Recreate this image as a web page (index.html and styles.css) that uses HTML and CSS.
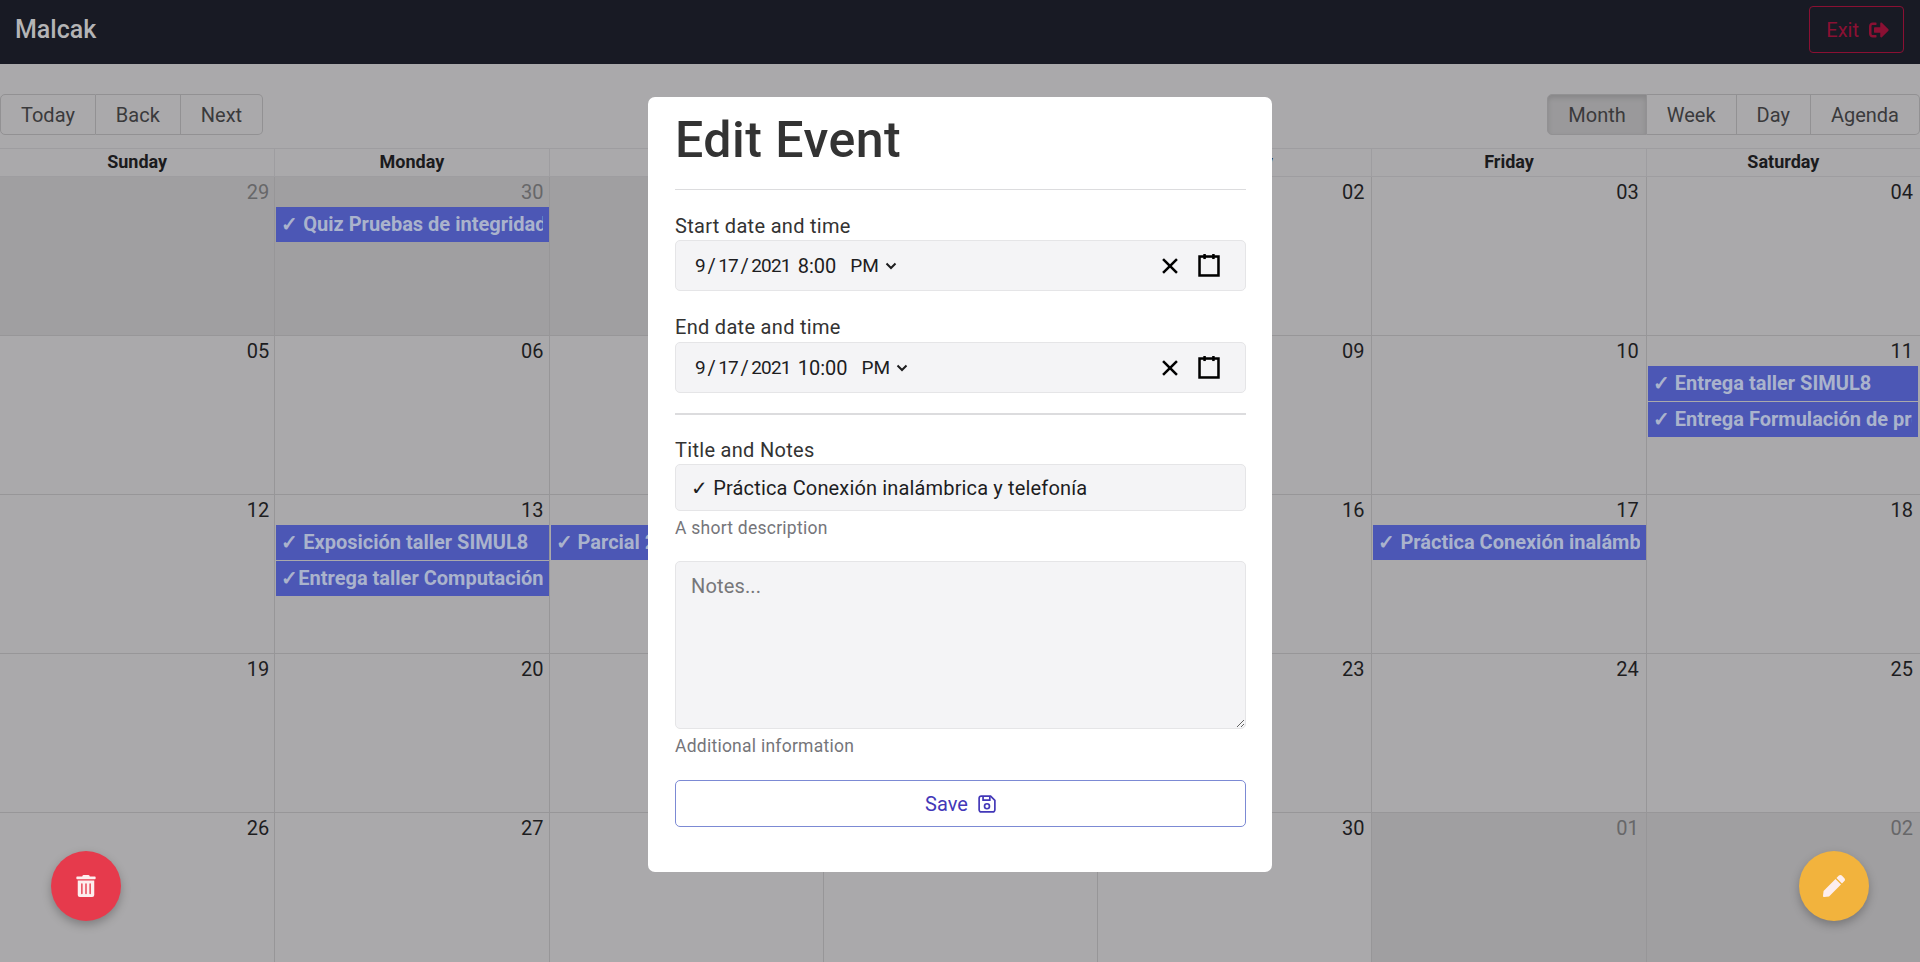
FILE: index.html
```html
<!DOCTYPE html>
<html>
<head>
    <title>Malcak</title>
    <link rel="stylesheet" href="styles.css">
</head>
<body>
    <header class="navbar">
        <span class="brand">Malcak</span>
        <button class="exit-btn">Exit
            <svg class="exit-icon" viewBox="0 0 512 512"><path d="M497 273L329 441c-15 15-41 4.500-41-17v-96H152c-13.300 0-24-10.700-24-24v-96c0-13.300 10.700-24 24-24h136V88c0-21.400 25.900-32 41-17l168 168c9.300 9.400 9.300 24.600 0 34zM192 436v-40c0-6.600-5.400-12-12-12H96c-17.700 0-32-14.300-32-32V160c0-17.700 14.300-32 32-32h84c6.600 0 12-5.400 12-12V76c0-6.600-5.400-12-12-12H96c-53 0-96 43-96 96v192c0 53 43 96 96 96h84c6.600 0 12-5.400 12-12z"/></svg>
        </button>
    </header>

    <main class="calendar">
        <div class="toolbar">
            <div class="btn-group">
                <button class="tool-btn">Today</button>
                <button class="tool-btn">Back</button>
                <button class="tool-btn">Next</button>
            </div>
            <div class="btn-group">
                <button class="tool-btn active">Month</button>
                <button class="tool-btn">Week</button>
                <button class="tool-btn">Day</button>
                <button class="tool-btn">Agenda</button>
            </div>
        </div>

        <div class="day-names">
            <div>Sunday</div>
            <div>Monday</div>
            <div>Tuesday</div>
            <div>Wednesday</div>
            <div>Thursday</div>
            <div>Friday</div>
            <div>Saturday</div>
        </div>

        <div class="week">
            <div class="cell off"><span class="date">29</span></div>
            <div class="cell off"><span class="date">30</span>
                <div class="event"><span>✓ Quiz Pruebas de integridad</span></div>
            </div>
            <div class="cell off"><span class="date">31</span></div>
            <div class="cell"><span class="date">01</span></div>
            <div class="cell"><span class="date">02</span></div>
            <div class="cell"><span class="date">03</span></div>
            <div class="cell"><span class="date">04</span></div>
        </div>
        <div class="week">
            <div class="cell"><span class="date">05</span></div>
            <div class="cell"><span class="date">06</span></div>
            <div class="cell"><span class="date">07</span></div>
            <div class="cell"><span class="date">08</span></div>
            <div class="cell"><span class="date">09</span></div>
            <div class="cell"><span class="date">10</span></div>
            <div class="cell"><span class="date">11</span>
                <div class="event"><span>✓ Entrega taller SIMUL8</span></div>
                <div class="event"><span>✓ Entrega Formulación de proyecto</span></div>
            </div>
        </div>
        <div class="week">
            <div class="cell"><span class="date">12</span></div>
            <div class="cell"><span class="date">13</span>
                <div class="event"><span>✓ Exposición taller SIMUL8</span></div>
                <div class="event"><span>✓Entrega taller Computación</span></div>
            </div>
            <div class="cell"><span class="date">14</span>
                <div class="event"><span>✓ Parcial 2</span></div>
            </div>
            <div class="cell"><span class="date">15</span></div>
            <div class="cell"><span class="date">16</span></div>
            <div class="cell"><span class="date">17</span>
                <div class="event"><span>✓ Práctica Conexión inalámbrica y telefonía</span></div>
            </div>
            <div class="cell"><span class="date">18</span></div>
        </div>
        <div class="week">
            <div class="cell"><span class="date">19</span></div>
            <div class="cell"><span class="date">20</span></div>
            <div class="cell"><span class="date">21</span></div>
            <div class="cell"><span class="date">22</span></div>
            <div class="cell"><span class="date">23</span></div>
            <div class="cell"><span class="date">24</span></div>
            <div class="cell"><span class="date">25</span></div>
        </div>
        <div class="week">
            <div class="cell"><span class="date">26</span></div>
            <div class="cell"><span class="date">27</span></div>
            <div class="cell"><span class="date">28</span></div>
            <div class="cell"><span class="date">29</span></div>
            <div class="cell"><span class="date">30</span></div>
            <div class="cell off"><span class="date">01</span></div>
            <div class="cell off"><span class="date">02</span></div>
        </div>
    </main>

    <button class="fab fab-delete">
        <svg viewBox="0 0 448 512"><path d="M32 464a48 48 0 0 0 48 48h288a48 48 0 0 0 48-48V128H32zm272-256a16 16 0 0 1 32 0v224a16 16 0 0 1-32 0zm-96 0a16 16 0 0 1 32 0v224a16 16 0 0 1-32 0zm-96 0a16 16 0 0 1 32 0v224a16 16 0 0 1-32 0zM432 32H312l-9.400-18.700A24 24 0 0 0 281.100 0H166.800a23.720 23.720 0 0 0-21.400 13.300L136 32H16A16 16 0 0 0 0 48v32a16 16 0 0 0 16 16h416a16 16 0 0 0 16-16V48a16 16 0 0 0-16-16z"/></svg>
    </button>
    <button class="fab fab-edit">
        <svg viewBox="0 0 512 512"><path d="M290.740 93.240l128.020 128.020-277.990 277.990-114.140 12.600C11.350 513.540-1.560 500.620.140 485.340l12.700-114.220 277.900-278.880zm207.200-19.060l-60.110-60.110c-18.750-18.750-49.160-18.750-67.910 0l-56.550 56.550 128.020 128.020 56.550-56.550c18.750-18.760 18.750-49.160 0-67.910z"/></svg>
    </button>

    <div class="modal">
        <h1 class="modal-title">Edit Event</h1>
        <hr class="rule">

        <label class="field-label">Start date and time</label>
        <div class="picker">
            <span class="picker-value">
                <span class="date-part">9</span><i>/</i><span class="date-part">17</span><i>/</i><span class="date-part">2021</span>
                <span class="time">8:00</span>
                <span class="ampm">PM</span>
                <svg class="chevron" viewBox="0 0 12 8"><path d="M1.500 1.500L6 6l4.500-4.500"/></svg>
            </span>
            <svg class="picker-icon" viewBox="0 0 19 19"><line x1="4" x2="15" y1="4" y2="15"/><line x1="15" x2="4" y1="4" y2="15"/></svg>
            <svg class="picker-icon" viewBox="0 0 19 19"><rect x="2" y="2" width="15" height="15" fill="none"/><line x1="6" x2="6" y1="0" y2="4"/><line x1="13" x2="13" y1="0" y2="4"/></svg>
        </div>

        <label class="field-label end-label">End date and time</label>
        <div class="picker">
            <span class="picker-value">
                <span class="date-part">9</span><i>/</i><span class="date-part">17</span><i>/</i><span class="date-part">2021</span>
                <span class="time">10:00</span>
                <span class="ampm">PM</span>
                <svg class="chevron" viewBox="0 0 12 8"><path d="M1.500 1.500L6 6l4.500-4.500"/></svg>
            </span>
            <svg class="picker-icon" viewBox="0 0 19 19"><line x1="4" x2="15" y1="4" y2="15"/><line x1="15" x2="4" y1="4" y2="15"/></svg>
            <svg class="picker-icon" viewBox="0 0 19 19"><rect x="2" y="2" width="15" height="15" fill="none"/><line x1="6" x2="6" y1="0" y2="4"/><line x1="13" x2="13" y1="0" y2="4"/></svg>
        </div>

        <hr class="rule rule-mid">

        <label class="field-label">Title and Notes</label>
        <input class="text-input" type="text" value="✓ Práctica Conexión inalámbrica y telefonía">
        <div class="hint">A short description</div>

        <textarea class="notes" placeholder="Notes..."></textarea>
        <div class="hint">Additional information</div>

        <button class="save-btn">Save
            <svg class="save-icon" viewBox="0 0 16 16"><path d="M2.800 1h8.400L15 4.800v8.400a1.800 1.800 0 0 1-1.800 1.800H2.800A1.800 1.800 0 0 1 1 13.200V2.800A1.800 1.800 0 0 1 2.800 1z"/><path d="M4.500 1v3.500h6V1"/><circle cx="8" cy="10" r="2.200"/></svg>
        </button>
    </div>
</body>
</html>
```

FILE: styles.css
```css
html,
body {
    height: 100%;
}

body {
    margin: 0;
    overflow: hidden;
    background-color: #aaa9ab;
    color: #1d1d1f;
    font-family: 'Roboto', 'Noto Sans', sans-serif;
    font-size: 20px;
    line-height: 30px;
}

button {
    font-family: inherit;
    font-size: inherit;
    line-height: inherit;
    cursor: pointer;
}

/* navbar */
.navbar {
    display: flex;
    align-items: center;
    justify-content: space-between;
    height: 64px;
    box-sizing: border-box;
    padding: 0 16px 5px 15px;
    background-color: #181a24;
}

.brand {
    color: #b4b4b6;
    font-size: 25px;
    font-weight: 500;
}

.exit-btn {
    display: flex;
    align-items: center;
    gap: 10px;
    height: 47px;
    padding: 0 14px 0 16px;
    border: 1px solid #8a1033;
    border-radius: 4px;
    background: none;
    color: #8a1033;
}

.exit-icon {
    width: 20px;
    height: 20px;
    fill: #8a1033;
}

/* calendar */
.calendar {
    height: 898px;
    overflow: hidden;
}

.toolbar {
    display: flex;
    justify-content: space-between;
    margin: 30px 0 13px;
}

.btn-group {
    display: flex;
}

.tool-btn {
    height: 41px;
    padding: 0 20px;
    border: 1px solid #929193;
    border-left-width: 0;
    background: none;
    color: #3a3a3c;
}

.tool-btn:first-child {
    border-left-width: 1px;
    border-radius: 5px 0 0 5px;
}

.tool-btn:last-child {
    border-radius: 0 5px 5px 0;
}

.tool-btn.active {
    background-color: #9a999b;
    box-shadow: inset 0 3px 5px rgba(0, 0, 0, 0.12);
}

.day-names {
    display: grid;
    grid-template-columns: repeat(7, 1fr);
    height: 29px;
    border-top: 1px solid #9e9da0;
    border-bottom: 1px solid #9e9da0;
    box-sizing: border-box;
    font-size: 18px;
    font-weight: 700;
    line-height: 25px;
    text-align: center;
    color: #1b1b1d;
}

.day-names div + div {
    border-left: 1px solid #9e9da0;
}

.week {
    display: grid;
    grid-template-columns: repeat(7, 1fr);
    height: 159px;
}

.day-names + .week {
    height: 158px;
}

.week + .week .cell {
    border-top: 1px solid #979698;
}

.cell {
    display: flex;
    flex-direction: column;
    min-width: 0;
    box-sizing: border-box;
}

.cell + .cell {
    border-left: 1px solid #979698;
}

.cell.off {
    background-color: #a09fa1;
}

.cell.off .date {
    color: #676769;
}

.date {
    padding-right: 5px;
    text-align: right;
}

.cell:nth-child(n+5) .date {
    padding-right: 7px;
}

.event {
    height: 35px;
    margin: 0 0 1px 1px;
    padding: 2px 6px 2px 5px;
    box-sizing: border-box;
    background-color: #4c57b5;
    color: #aab3cc;
    font-weight: 700;
    white-space: nowrap;
}

.cell:last-child .event {
    margin-right: 2px;
}

.event span {
    display: block;
    overflow: hidden;
}

/* floating buttons */
.fab {
    position: fixed;
    bottom: 41px;
    display: flex;
    align-items: center;
    justify-content: center;
    width: 70px;
    height: 70px;
    padding: 0;
    border: 0;
    border-radius: 50%;
    box-shadow: 0 4px 10px rgba(0, 0, 0, 0.25);
}

.fab svg {
    width: 22px;
    height: 22px;
    fill: #fdeeee;
}

.fab-delete {
    left: 51px;
    background-color: #e63a4c;
}

.fab-edit {
    right: 51px;
    background-color: #f2b33d;
}

/* modal */
.modal {
    position: fixed;
    top: 97px;
    left: 648px;
    width: 624px;
    height: 775px;
    box-sizing: border-box;
    padding: 0 26px 0 27px;
    border-radius: 7px;
    background-color: #fff;
    color: #333;
}

.modal-title {
    margin: 14px 0 20px;
    color: #333;
    font-size: 50px;
    font-weight: 500;
    letter-spacing: 0.5px;
    line-height: 58px;
}

.rule {
    height: 1px;
    margin: 0 0 21px;
    border: 0;
    background-color: #dcdcde;
}

.rule-mid {
    height: 2px;
    margin: 20px 0 20px;
}

.field-label {
    display: block;
    margin-bottom: -1px;
    letter-spacing: 0.3px;
}

.end-label {
    margin-top: 21px;
    margin-bottom: 0;
}

.picker {
    display: flex;
    align-items: center;
    height: 51px;
    box-sizing: border-box;
    padding: 0 24px 0 19px;
    border: 1px solid #e5e5e7;
    border-radius: 5px;
    background-color: #f4f4f6;
    color: #1d1d1f;
}

.picker-value {
    display: flex;
    flex: 1;
    align-items: center;
}

.picker-value i {
    margin: 0 2.500px;
    font-style: normal;
}

.date-part {
    font-size: 19px;
    letter-spacing: -0.8px;
}

.time {
    margin-left: 7px;
}

.ampm {
    margin-left: 14px;
    font-size: 19px;
}

.chevron {
    width: 12px;
    height: 8px;
    margin-left: 6px;
    fill: none;
    stroke: #1d1d1f;
    stroke-width: 2;
}

.picker-icon {
    width: 24px;
    height: 24px;
    margin-left: 15px;
    stroke: #000;
    stroke-width: 2;
}

.text-input,
.notes {
    display: block;
    width: 100%;
    box-sizing: border-box;
    padding: 7.500px 15px;
    border: 1px solid #e5e5e7;
    border-radius: 5px;
    background-color: #f4f4f6;
    color: #1d1d1f;
    font-family: inherit;
    font-size: 20px;
    letter-spacing: 0.15px;
    line-height: 30px;
}

.text-input {
    height: 47px;
}

.notes {
    height: 168px;
    margin-top: 20px;
    padding-top: 8.500px;
    resize: vertical;
}

.notes::placeholder {
    color: #77777a;
}

.hint {
    margin-top: 4px;
    color: #75757a;
    font-size: 17.500px;
    letter-spacing: 0.25px;
    line-height: 26px;
}

.save-btn {
    display: flex;
    align-items: center;
    justify-content: center;
    gap: 10px;
    width: 100%;
    height: 47px;
    margin-top: 21px;
    border: 1.500px solid #7c8ad4;
    border-radius: 5px;
    background-color: #fff;
    color: #4338b8;
}

.save-icon {
    width: 18px;
    height: 18px;
    fill: none;
    stroke: #4338b8;
    stroke-width: 1.500;
}
```
